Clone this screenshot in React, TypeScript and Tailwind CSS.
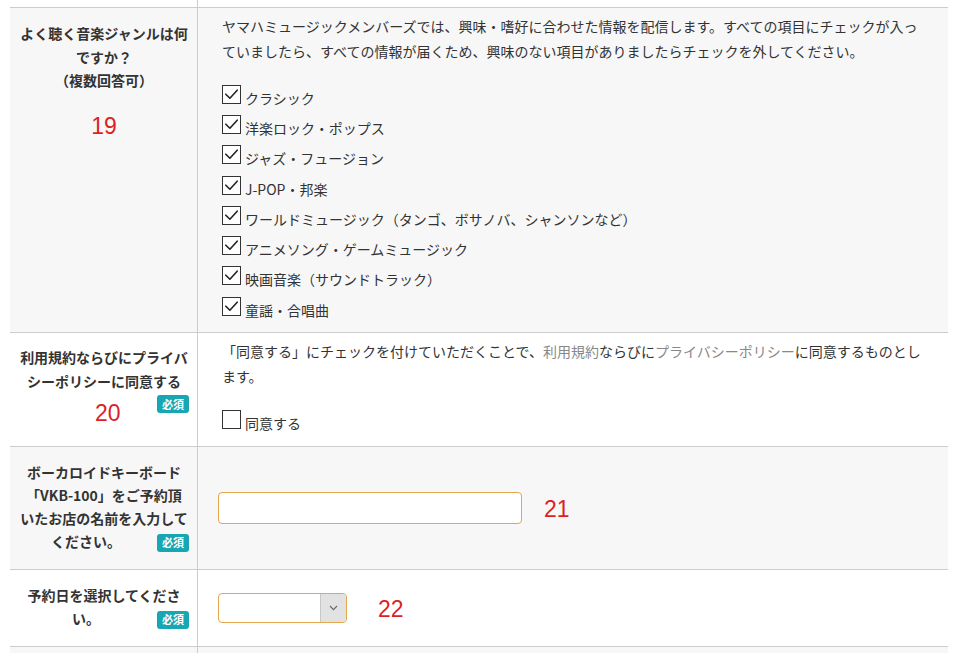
import React from "react";

const FONT = { fontFamily: '"Noto Sans CJK JP", "Noto Sans", sans-serif' };

function Box({ checked }: { checked: boolean }) {
  return (
    <svg width="19" height="19" viewBox="0 0 19 19" className="inline-block align-baseline">
      <rect x="0.5" y="0.5" width="18" height="18" fill="#ffffff" stroke="#333333" strokeWidth="1" />
      {checked && (
        <path d="M3.8 9.2 L7.9 13.2 L15.2 5.2" fill="none" stroke="#222222" strokeWidth="1.6" strokeLinecap="round" strokeLinejoin="round" />
      )}
    </svg>
  );
}

function Item({ label, checked }: { label: string; checked: boolean }) {
  return (
    <div className="leading-[30.3px] whitespace-nowrap">
      <Box checked={checked} />
      <span className="ml-[4px]">{label}</span>
    </div>
  );
}

function Badge() {
  return (
    <span className="inline-flex h-[18px] w-[32px] shrink-0 items-center justify-center rounded-[3px] bg-[#17a6b4] text-[11px] font-bold leading-none text-white">
      必須
    </span>
  );
}

function Num({ n }: { n: string }) {
  return (
    <span className="text-[23px] font-normal leading-[26px] text-[#dc1f26]" style={{ fontFamily: '"Liberation Sans", Arial, sans-serif' }}>
      {n}
    </span>
  );
}

const genres = [
  "クラシック",
  "洋楽ロック・ポップス",
  "ジャズ・フュージョン",
  "J-POP・邦楽",
  "ワールドミュージック（タンゴ、ボサノバ、シャンソンなど）",
  "アニメソング・ゲームミュージック",
  "映画音楽（サウンドトラック）",
  "童謡・合唱曲",
];

export default function App() {
  return (
    <div className="h-[653px] w-[964px] overflow-hidden bg-white pl-[10px] text-[#333333]" style={FONT}>
      <div className="w-[938px]">
        {/* previous row tail */}
        <div className="grid h-[8px] grid-cols-[188px_1fr] border-b border-[#cccccc] bg-white">
          <div className="border-r border-[#cccccc]" />
          <div />
        </div>

        {/* row 19 */}
        <div className="grid grid-cols-[188px_1fr] border-b border-[#cccccc] bg-[#f7f7f7]">
          <div className="border-r border-[#cccccc] pb-[14px] pl-[9px] pr-[8px] pt-[14px] text-center text-[14px] font-bold leading-[23.5px] whitespace-nowrap">
            <div>よく聴く音楽ジャンルは何</div>
            <div>ですか？</div>
            <div>（複数回答可）</div>
            <div className="mt-[20px] text-center">
              <Num n="19" />
            </div>
          </div>
          <div className="pb-[7px] pl-[20px] pr-[16px] pt-[6px] text-[14px]">
            <p className="pl-[4px] leading-[25px] whitespace-nowrap">
              ヤマハミュージックメンバーズでは、興味・嗜好に合わせた情報を配信します。すべての項目にチェックが入っ
              <br />
              ていましたら、すべての情報が届くため、興味のない項目がありましたらチェックを外してください。
            </p>
            <div className="mt-[18.7px] pl-[4px]">
              {genres.map((g) => (
                <Item key={g} label={g} checked />
              ))}
            </div>
          </div>
        </div>

        {/* row 20 */}
        <div className="grid grid-cols-[188px_1fr] border-b border-[#cccccc] bg-white">
          <div className="relative border-r border-[#cccccc] pb-[14px] pl-[9px] pr-[8px] pt-[12px] text-center text-[14px] font-bold leading-[24px] whitespace-nowrap">
            <div>利用規約ならびにプライバ</div>
            <div>シーポリシーに同意する</div>
            <div className="flex h-[22px] items-center justify-end">
              <Badge />
            </div>
            <div className="absolute left-[85px] top-[67px]">
              <Num n="20" />
            </div>
          </div>
          <div className="pb-[8px] pl-[20px] pr-[16px] pt-[6px] text-[14px]">
            <p className="pl-[4px] leading-[25px] whitespace-nowrap">
              「同意する」にチェックを付けていただくことで、
              <span className="text-[#888888]">利用規約</span>ならびに
              <span className="text-[#888888]">プライバシーポリシー</span>に同意するものとし
              <br />
              ます。
            </p>
            <div className="mt-[18.7px] pl-[4px]">
              <Item label="同意する" checked={false} />
            </div>
          </div>
        </div>

        {/* row 21 */}
        <div className="grid grid-cols-[188px_1fr] border-b border-[#cccccc] bg-[#f7f7f7]">
          <div className="border-r border-[#cccccc] pb-[16px] pl-[9px] pr-[8px] pt-[14px] text-center text-[14px] font-bold leading-[23px] whitespace-nowrap">
            <div>ボーカロイドキーボード</div>
            <div>「VKB-100」をご予約頂</div>
            <div>いたお店の名前を入力して</div>
            <div className="flex items-center">
              <span className="flex-1 text-center">ください。</span>
              <span className="ml-[4px]">
                <Badge />
              </span>
            </div>
          </div>
          <div className="flex items-center pl-[20px]">
            <div className="h-[32px] w-[304px] rounded-[4px] border border-[#e4a74c] bg-white" />
            <div className="ml-[22px] pt-[1px]">
              <Num n="21" />
            </div>
          </div>
        </div>

        {/* row 22 */}
        <div className="grid grid-cols-[188px_1fr] border-b border-[#cccccc] bg-white">
          <div className="border-r border-[#cccccc] pb-[16px] pl-[9px] pr-[8px] pt-[14px] text-center text-[14px] font-bold leading-[23px] whitespace-nowrap">
            <div>予約日を選択してくださ</div>
            <div className="flex items-center">
              <span className="flex-1 text-center">い。</span>
              <span className="ml-[4px]">
                <Badge />
              </span>
            </div>
          </div>
          <div className="flex items-center pl-[20px]">
            <div className="flex h-[30px] w-[129px] overflow-hidden rounded-[4px] border border-[#e4a74c] bg-white">
              <div className="flex-1" />
              <div className="flex w-[26px] items-center justify-center border-l border-[#c8c8c8] bg-[#e2e2e2]">
                <svg width="9" height="6" viewBox="0 0 9 6">
                  <path d="M1 1 L4.5 4.6 L8 1" fill="none" stroke="#666666" strokeWidth="1.1" />
                </svg>
              </div>
            </div>
            <div className="ml-[31px] pt-[1px]">
              <Num n="22" />
            </div>
          </div>
        </div>

        {/* next row */}
        <div className="grid h-[30px] grid-cols-[188px_1fr] bg-[#f7f7f7]">
          <div className="border-r border-[#cccccc]" />
          <div />
        </div>
      </div>
    </div>
  );
}
